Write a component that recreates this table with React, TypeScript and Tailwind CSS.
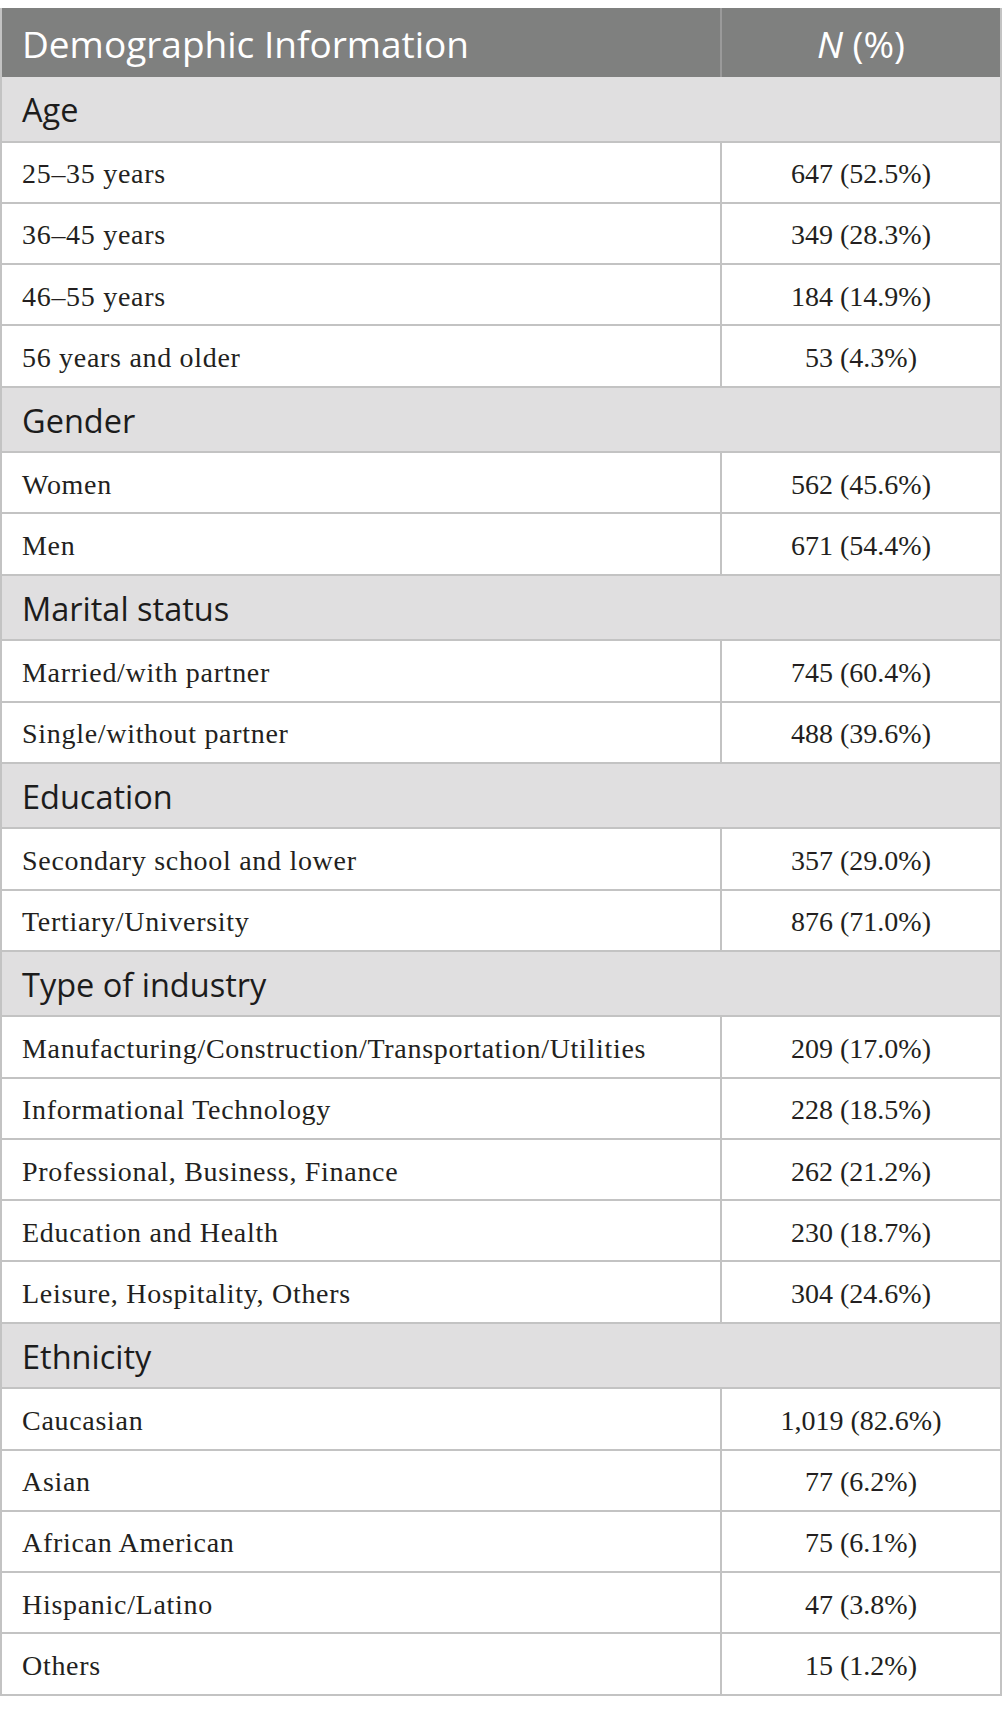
import React from 'react';

type Group = { title: string; rows: [string, string][] };

const groups: Group[] = [
  {
    title: 'Age',
    rows: [
      ['25–35 years', '647 (52.5%)'],
      ['36–45 years', '349 (28.3%)'],
      ['46–55 years', '184 (14.9%)'],
      ['56 years and older', '53 (4.3%)'],
    ],
  },
  {
    title: 'Gender',
    rows: [
      ['Women', '562 (45.6%)'],
      ['Men', '671 (54.4%)'],
    ],
  },
  {
    title: 'Marital status',
    rows: [
      ['Married/with partner', '745 (60.4%)'],
      ['Single/without partner', '488 (39.6%)'],
    ],
  },
  {
    title: 'Education',
    rows: [
      ['Secondary school and lower', '357 (29.0%)'],
      ['Tertiary/University', '876 (71.0%)'],
    ],
  },
  {
    title: 'Type of industry',
    rows: [
      ['Manufacturing/Construction/Transportation/Utilities', '209 (17.0%)'],
      ['Informational Technology', '228 (18.5%)'],
      ['Professional, Business, Finance', '262 (21.2%)'],
      ['Education and Health', '230 (18.7%)'],
      ['Leisure, Hospitality, Others', '304 (24.6%)'],
    ],
  },
  {
    title: 'Ethnicity',
    rows: [
      ['Caucasian', '1,019 (82.6%)'],
      ['Asian', '77 (6.2%)'],
      ['African American', '75 (6.1%)'],
      ['Hispanic/Latino', '47 (3.8%)'],
      ['Others', '15 (1.2%)'],
    ],
  },
];

const sans = "font-['Open_Sans',sans-serif]";
const serif = "font-['Liberation_Serif',serif]";

function GroupRow({ title }: { title: string }) {
  return (
    <div className="h-[65.6px] flex items-center pl-5 pt-[3px] bg-[#e0dfe0] border-b-2 border-[#c3c3c3]">
      <span className={`${sans} text-[32.5px] leading-none text-[#1c1c1c]`}>{title}</span>
    </div>
  );
}

function DataRow({ label, value }: { label: string; value: string }) {
  return (
    <div className={`${serif} grid grid-cols-[720px_1fr] h-[61.25px] border-b-2 border-[#c3c3c3] text-[28px] text-[#231f20]`}>
      <div className="flex items-center pl-5 pt-1 tracking-[0.7px] border-r-2 border-[#c3c3c3]">{label}</div>
      <div className="flex items-center justify-center pt-1">{value}</div>
    </div>
  );
}

const App: React.FC = () => {
  return (
    <div className="min-h-screen bg-white pt-2">
      <div className="w-[1002px] border-x-2 border-[#c3c3c3]">
        {/* header */}
        <div className={`${sans} grid grid-cols-[720px_1fr] h-[69px] bg-[#7f807f] text-white text-[37px]`}>
          <div className="flex items-center pl-5 pt-[2px] border-r-2 border-[#9a9a9a]">Demographic Information</div>
          <div className="flex items-center justify-center pt-[2px]">
            <span className="italic">N</span>&nbsp;(%)
          </div>
        </div>
        {groups.map((g) => (
          <div key={g.title}>
            <GroupRow title={g.title} />
            {g.rows.map(([l, v]) => (
              <DataRow key={l} label={l} value={v} />
            ))}
          </div>
        ))}
      </div>
    </div>
  );
};

export default App;
